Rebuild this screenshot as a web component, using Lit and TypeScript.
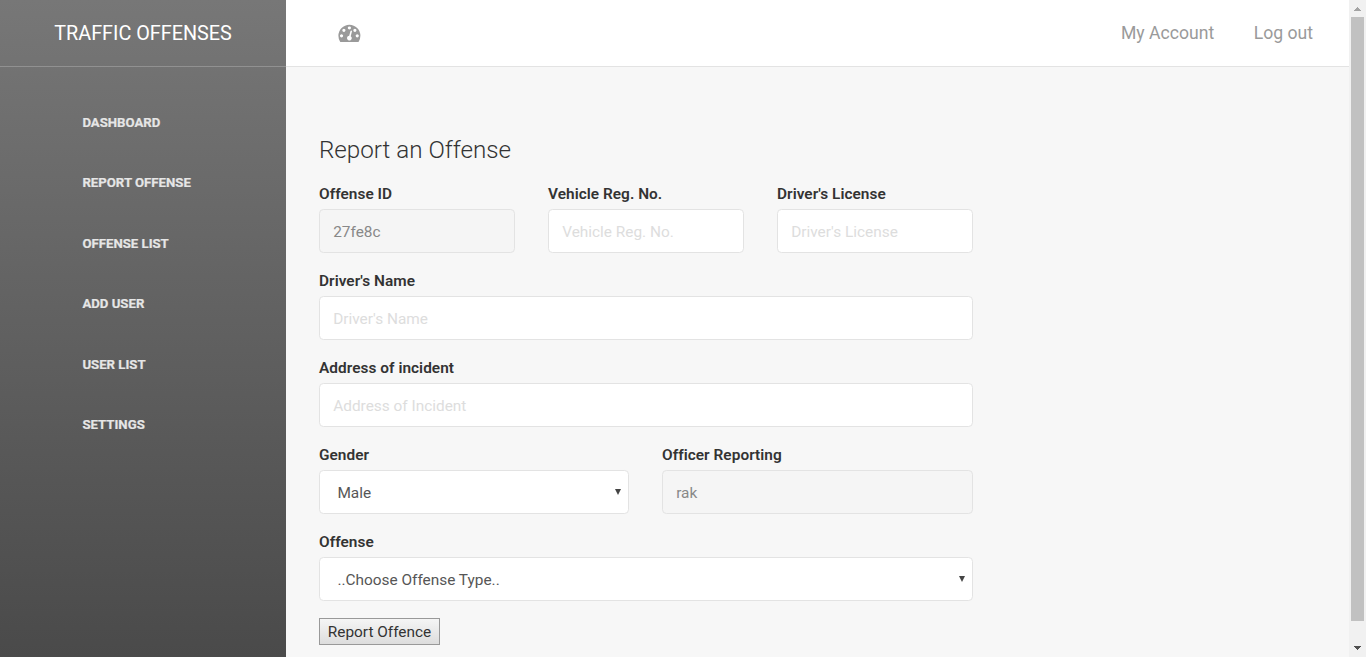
import { LitElement, html, css } from "lit";
import { customElement, property } from "lit/decorators.js";

@customElement("form-field")
class FormField extends LitElement {
  @property() label = "";
  @property() value = "";
  @property() kind = "input";

  static styles = css`
    :host { display: block; min-width: 0; }
    .label {
      height: 24px; line-height: 18px; font-size: 15.4px; font-weight: 600;
      color: #333; white-space: nowrap; letter-spacing: 0.04px;
      font-variant-ligatures: common-ligatures;
    }
    .box {
      box-sizing: border-box; height: 44px; border: 1px solid #e3e3e3; border-radius: 4.4px;
      background: #fff; padding: 2px 13.2px 0; display: flex; align-items: center;
      font-size: 15.4px; color: #565656; white-space: nowrap;
    }
    .placeholder { color: #dddddd; }
    .disabled { background: #f5f5f5; color: #888; }
    .select { padding: 2px 7px 0 17.4px; justify-content: space-between; }
    .arrow { width: 6px; height: 6px; margin-top: -3px; fill: #444; display: block; }
  `;

  render() {
    return html`
      <div class="label">${this.label}</div>
      <div class="box ${this.kind}">
        <span>${this.value}</span>
        ${this.kind === "select"
          ? html`<svg class="arrow" viewBox="0 0 6 6"><path d="M0 0h6L3 6z" /></svg>`
          : ""}
      </div>
    `;
  }
}

@customElement("app-root")
class AppRoot extends LitElement {
  static styles = css`
    :host {
      display: flex; height: 657px; overflow: hidden; background: #f7f7f7;
      font-family: Roboto, "Liberation Sans", sans-serif;
    }
    .sidebar {
      width: 286px; flex: none; color: #fff;
      background: linear-gradient(#777777, #4a4a4a);
    }
    .brand {
      box-sizing: border-box; height: 67px; border-bottom: 1px solid #919191; padding-top: 1px;
      text-align: center; font-size: 19.8px; line-height: 66px;
    }
    .nav { display: flex; flex-direction: column; padding: 25.6px 0 0 82.4px; }
    .item {
      height: 60.5px; line-height: 60px; font-size: 13.2px; font-weight: 700;
      color: #e6e6e6; white-space: nowrap; -webkit-text-stroke: 0.2px #e6e6e6;
    }
    .main { flex: 1; min-width: 0; }
    .topbar {
      box-sizing: border-box; height: 67px; background: #fff; border-bottom: 1px solid #e3e3e3;
      display: flex; align-items: center; padding: 0 36px 0 52px;
      font-size: 17.6px; color: #9a9a9a;
    }
    .gauge { width: 22px; height: 17.3px; fill: #9a9a9a; display: block; overflow: visible; margin-top: 1px; }
    .links { margin-left: auto; display: flex; gap: 39.6px; }
    .form { padding: 67px 0 0 33px; width: 654px; }
    .title { font-size: 24.2px; font-weight: 300; line-height: 32px; color: #333; margin-bottom: 19px; }
    .row { display: grid; gap: 33px; margin-bottom: 19px; }
    .three { grid-template-columns: repeat(3, 1fr); }
    .two { grid-template-columns: 310px 311px; }
    .submit {
      box-sizing: border-box; width: 121px; height: 27px; margin-top: -2px; display: block; padding: 0;
      border: 1px solid #999; border-radius: 0; background: linear-gradient(#f5f5f5, #dddddd);
      font: 15.4px Roboto, "Liberation Sans", sans-serif; color: #333; white-space: nowrap;
    }
    .scrollbar {
      width: 17px; flex: none; background: #f1f1f1; display: flex; flex-direction: column;
      align-items: center;
    }
    .cap { width: 17px; height: 17px; display: block; }
    .thumb { width: 13px; height: 604px; background: #c1c1c1; margin-bottom: auto; }
    .up { fill: #a3a3a3; }
    .down { fill: #505050; }
  `;

  items = ["DASHBOARD", "REPORT OFFENSE", "OFFENSE LIST", "ADD USER", "USER LIST", "SETTINGS"];

  render() {
    return html`
      <aside class="sidebar">
        <div class="brand">TRAFFIC OFFENSES</div>
        <nav class="nav">${this.items.map((t) => html`<div class="item"><span>${t}</span></div>`)}</nav>
      </aside>
      <main class="main">
        <header class="topbar">
          <svg class="gauge" viewBox="-32 272 1792 1408">
            <path d="M384 1152q0-53-37.5-90.5t-90.5-37.5-90.5 37.5-37.5 90.5 37.5 90.5 90.5 37.5 90.5-37.5 37.5-90.5zm192-448q0-53-37.5-90.5t-90.5-37.5-90.5 37.5-37.5 90.5 37.5 90.5 90.5 37.5 90.5-37.5 37.5-90.5zm428 481l101-382q6-26-7.5-48.5t-38.5-29.5-48 6.5-30 39.5l-101 382q-60 5-107 43.5t-63 98.5q-20 77 20 146t117 89 146-20 89-117q16-60-6-117t-72-91zm660-33q0-53-37.5-90.5t-90.5-37.5-90.5 37.5-37.5 90.5 37.5 90.5 90.5 37.5 90.5-37.5 37.5-90.5zm-640-640q0-53-37.5-90.5t-90.5-37.5-90.5 37.5-37.5 90.5 37.5 90.5 90.5 37.5 90.5-37.5 37.5-90.5zm448 192q0-53-37.5-90.5t-90.5-37.5-90.5 37.5-37.5 90.5 37.5 90.5 90.5 37.5 90.5-37.5 37.5-90.5zm320 448q0 261-141 483-19 29-54 29h-1402q-35 0-54-29-141-221-141-483 0-182 71-348t191-286 286-191 348-71 348 71 286 191 191 286 71 348z" />
          </svg>
          <div class="links"><span>My Account</span><span>Log out</span></div>
        </header>
        <section class="form">
          <div class="title">Report an Offense</div>
          <div class="row three">
            <form-field label="Offense ID" value="27fe8c" kind="disabled"></form-field>
            <form-field label="Vehicle Reg. No." value="Vehicle Reg. No." kind="placeholder"></form-field>
            <form-field label="Driver's License" value="Driver's License" kind="placeholder"></form-field>
          </div>
          <div class="row">
            <form-field label="Driver's Name" value="Driver's Name" kind="placeholder"></form-field>
          </div>
          <div class="row">
            <form-field label="Address of incident" value="Address of Incident" kind="placeholder"></form-field>
          </div>
          <div class="row two">
            <form-field label="Gender" value="Male" kind="select"></form-field>
            <form-field label="Officer Reporting" value="rak" kind="disabled"></form-field>
          </div>
          <div class="row">
            <form-field label="Offense" value="..Choose Offense Type.." kind="select"></form-field>
          </div>
          <button class="submit">Report Offence</button>
        </section>
      </main>
      <div class="scrollbar">
        <svg class="cap up" viewBox="0 0 17 17" shape-rendering="crispEdges">
          <path d="M8 7h1v1h1v1h1v1h1v1H5v-1h1V9h1V8h1z" />
        </svg>
        <div class="thumb"></div>
        <svg class="cap down" viewBox="0 0 17 17" shape-rendering="crispEdges">
          <path d="M5 6h7v1h-1v1h-1v1H9v1H8V9H7V8H6V7H5z" />
        </svg>
      </div>
    `;
  }
}
